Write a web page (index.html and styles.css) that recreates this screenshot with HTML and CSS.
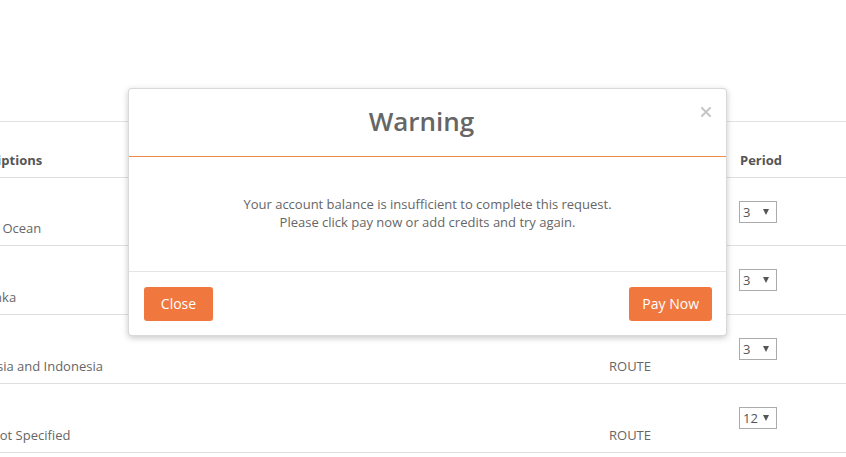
FILE: index.html
```html
<!DOCTYPE html>
<html lang="en">
<head>
<meta charset="utf-8">
<title>Warning</title>
<link rel="stylesheet" href="styles.css">
</head>
<body>
<div class="page">
  <div class="table">
    <div class="row head">
      <div class="cell">Descriptions</div>
      <div class="cell">Type</div>
      <div class="cell">Period</div>
    </div>
    <div class="row first">
      <div class="cell">Indian Ocean</div>
      <div class="cell">ROUTE</div>
      <div class="cell mid"><div class="select"><span>3</span><span class="arrow"></span></div></div>
    </div>
    <div class="row">
      <div class="cell">Sri Lanka</div>
      <div class="cell">ROUTE</div>
      <div class="cell mid"><div class="select"><span>3</span><span class="arrow"></span></div></div>
    </div>
    <div class="row">
      <div class="cell">Malaysia and Indonesia</div>
      <div class="cell">ROUTE</div>
      <div class="cell mid"><div class="select"><span>3</span><span class="arrow"></span></div></div>
    </div>
    <div class="row">
      <div class="cell">Port Not Specified</div>
      <div class="cell">ROUTE</div>
      <div class="cell mid"><div class="select"><span>12</span><span class="arrow"></span></div></div>
    </div>
  </div>

  <div class="modal">
    <div class="modal-header">
      <h2 class="modal-title">Warning</h2>
      <button class="close" aria-label="Close">
        <svg width="10" height="10" viewBox="0 0 10 10"><path d="M1 1L9 9M9 1L1 9" stroke="#c6c6c6" stroke-width="2" stroke-linecap="square"/></svg>
      </button>
    </div>
    <div class="modal-body">
      <p>Your account balance is insufficient to complete this request.</p>
      <p>Please click pay now or add credits and try again.</p>
    </div>
    <div class="modal-footer">
      <button class="btn">Close</button>
      <button class="btn">Pay Now</button>
    </div>
  </div>
</div>
</body>
</html>
```

FILE: styles.css
```css
* { box-sizing: border-box; }
html, body {
  margin: 0;
  padding: 0;
  background: #fff;
  overflow: hidden;
}
body {
  font-family: "Open Sans", "Liberation Sans", sans-serif;
  font-size: 13px;
  line-height: 18px;
  color: #666;
  width: 846px;
  height: 457px;
}
.page {
  position: relative;
  padding-top: 121px;
  height: 457px;
}
.table {
  margin-left: -39px;
  width: 885px;
  border-top: 1px solid #e2e2e2;
}
.row {
  display: grid;
  grid-template-columns: 648px 131px 106px;
  height: 69px;
  border-bottom: 1px solid #dedede;
}
.row.first {
  height: 68px;
}
.row.head {
  height: 56px;
  font-weight: 700;
  color: #555;
}
.cell {
  align-self: end;
  padding-bottom: 8px;
  white-space: nowrap;
}
.cell.mid {
  align-self: center;
  padding-bottom: 0;
}
.select {
  width: 38px;
  height: 22px;
  margin-left: -1px;
  border: 1px solid #ababab;
  display: flex;
  align-items: center;
  justify-content: space-between;
  padding: 0 7px 0 3px;
  color: #555;
  font-size: 13px;
}
.arrow {
  width: 0;
  height: 0;
  border-left: 3px solid transparent;
  border-right: 3px solid transparent;
  border-top: 6px solid #555;
}
.modal {
  position: absolute;
  left: 128px;
  top: 88px;
  width: 599px;
  background: #fff;
  border: 1px solid rgba(0,0,0,0.15);
  border-radius: 4px;
  box-shadow: 0 2px 6px rgba(0,0,0,0.22);
}
.modal-header {
  position: relative;
  height: 68px;
  padding: 0 12px 3px 0;
  border-bottom: 1px solid #f0884a;
  display: flex;
  align-items: center;
  justify-content: center;
}
.modal-title {
  margin: 0;
  font-size: 26px;
  font-weight: 600;
  line-height: 34px;
  color: #666;
}
.close {
  position: absolute;
  right: 15px;
  top: 18px;
  border: 0;
  background: none;
  padding: 0;
  width: 10px;
  height: 10px;
  display: flex;
}
.modal-body {
  padding: 38px 15px 40px;
  text-align: center;
  border-bottom: 1px solid #e5e5e5;
}
.modal-body p {
  margin: 0;
}
.modal-footer {
  display: flex;
  justify-content: space-between;
  padding: 15px 14px 14px 15px;
}
.btn {
  min-width: 69px;
  height: 34px;
  padding: 0 13px;
  border: 0;
  border-radius: 3px;
  background: #f0783e;
  color: #fff;
  font-family: "Open Sans", "Liberation Sans", sans-serif;
  font-size: 14px;
  line-height: 34px;
}
```
